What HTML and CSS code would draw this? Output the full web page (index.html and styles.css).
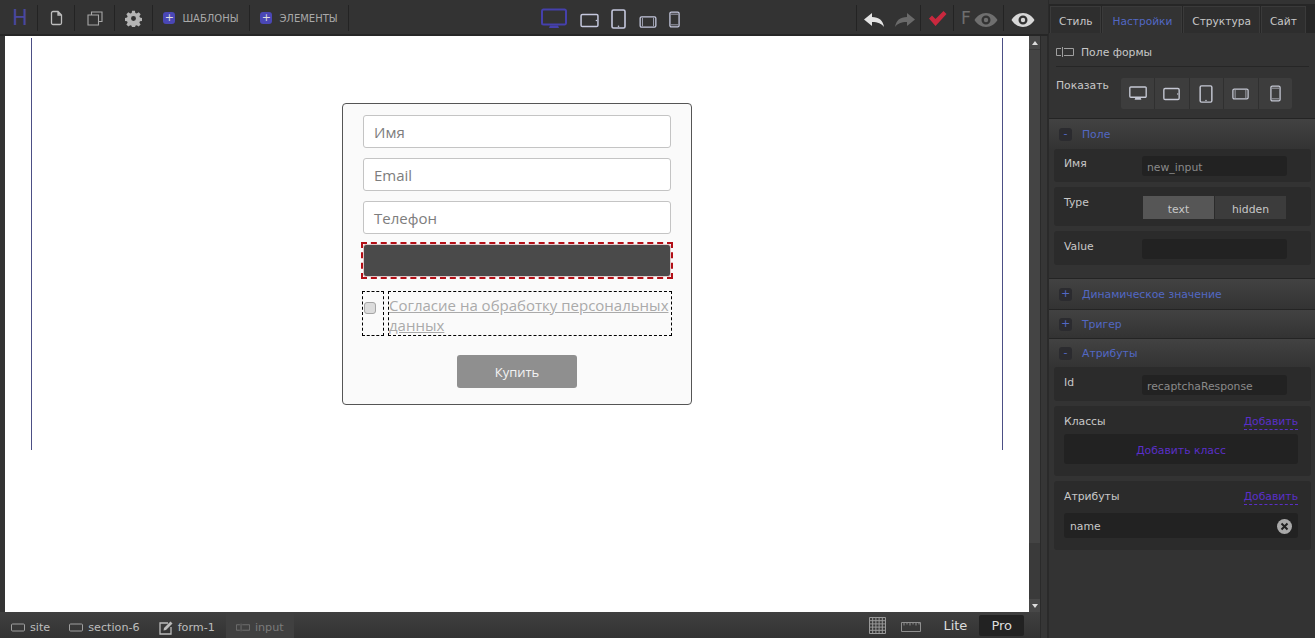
FILE: index.html
```html
<!DOCTYPE html>
<html lang="ru">
<head>
    <meta charset="UTF-8">
    <title>Редактор</title>
    <link rel="stylesheet" href="styles.css">
</head>
<body>
<svg class="defs" width="0" height="0">
    <symbol id="i-desk" viewBox="0 0 26 22"><path d="M2.500 1.500h21a1.500 1.500 0 0 1 1.500 1.500v12a1.500 1.500 0 0 1-1.500 1.500h-21a1.500 1.500 0 0 1-1.500-1.500v-12a1.500 1.500 0 0 1 1.500-1.500z" fill="none" stroke="currentColor" stroke-width="2"/><path d="M9 17.500h8l1 2.500h-10z" fill="currentColor"/></symbol>
    <symbol id="i-tabh" viewBox="0 0 20 16"><rect x="1" y="1.500" width="18" height="13" rx="1.500" fill="none" stroke="currentColor" stroke-width="1.600"/><circle cx="17.300" cy="8" r=".8" fill="currentColor"/></symbol>
    <symbol id="i-tabv" viewBox="0 0 15 20"><rect x="1" y="1" width="13" height="18" rx="1.500" fill="none" stroke="currentColor" stroke-width="1.600"/><circle cx="7.500" cy="17.300" r=".8" fill="currentColor"/></symbol>
    <symbol id="i-phh" viewBox="0 0 19 13"><rect x="1" y="1" width="17" height="11" rx="1.500" fill="none" stroke="currentColor" stroke-width="1.400"/><path d="M3.500 2v9M15.500 2v9" stroke="currentColor" stroke-width=".8"/></symbol>
    <symbol id="i-phv" viewBox="0 0 12 18"><rect x="1" y="1" width="10" height="16" rx="1.500" fill="none" stroke="currentColor" stroke-width="1.400"/><path d="M2 3.200h8M2 14.800h8" stroke="currentColor" stroke-width=".8"/></symbol>
    <symbol id="i-field" viewBox="0 0 18 10"><path d="M5 1.500H.5v7H5M8 1.500h9.500v7H8M6.500 0v10" fill="none" stroke="currentColor"/></symbol>
    <symbol id="i-box" viewBox="0 0 14 9"><rect x=".5" y="1" width="13" height="7" rx="1" fill="none" stroke="currentColor"/></symbol>
    <symbol id="i-eye" viewBox="0 0 24 16"><path fill-rule="evenodd" d="M12 1c5 0 9 3 11.500 7-2.500 4-6.500 7-11.500 7s-9-3-11.500-7c2.500-4 6.500-7 11.500-7zm0 2.500a4.500 4.500 0 1 0 0 9 4.500 4.500 0 0 0 0-9zm0 2.300a2.200 2.200 0 1 1 0 4.400 2.200 2.200 0 0 1 0-4.400z" fill="currentColor"/></symbol>
    <symbol id="i-arrow" viewBox="0 0 22 16"><path d="M9 1v4c7 0 11 3.500 12 10-2.500-3.500-6-5-12-5v4L1 7.500z" fill="currentColor"/></symbol>
</svg>

<header class="topbar">
    <div class="tool tool-logo">H</div>
    <div class="tool tool-icon">
        <svg width="13" height="16" viewBox="0 0 13 16"><path d="M1.500 3a1.500 1.500 0 0 1 1.500-1.500h5l3.500 3.500v8a1.500 1.500 0 0 1-1.500 1.500h-7a1.500 1.500 0 0 1-1.500-1.500zM8 1.500v3.500h3.500" fill="none" stroke="#bdbdbd" stroke-width="1.300"/></svg>
    </div>
    <div class="tool tool-icon tool-copy">
        <svg width="16" height="15" viewBox="0 0 16 15"><path d="M4.500 3.500v-2.500h10.500v9.500h-3M1 4h10.500v10h-10.500z" fill="none" stroke="#a8a8a8" stroke-width="1.100"/></svg>
    </div>
    <div class="tool tool-icon tool-gear">
        <svg width="17" height="17" viewBox="0 0 24 24"><path fill-rule="evenodd" fill="#b5b5b5" d="M10 1h4l.6 3.200 2 .8 2.700-1.800 2.800 2.800-1.800 2.700.8 2 3.200.6v4l-3.200.6-.8 2 1.800 2.700-2.800 2.800-2.700-1.800-2 .8-.6 3.200h-4l-.6-3.200-2-.8-2.700 1.800-2.800-2.800 1.800-2.700-.8-2-3.200-.6v-4l3.200-.6.800-2-1.800-2.700 2.800-2.800 2.700 1.800 2-.8zM12 8.500a3.500 3.500 0 1 0 0 7 3.500 3.500 0 0 0 0-7z"/></svg>
    </div>
    <div class="tool tool-add"><span class="plus">+</span>ШАБЛОНЫ</div>
    <div class="tool tool-add tool-last"><span class="plus">+</span>ЭЛЕМЕНТЫ</div>

    <div class="devices">
        <svg class="dev-active" width="26" height="22"><use href="#i-desk"/></svg>
        <svg class="dev-b2" width="19" height="15"><use href="#i-tabh"/></svg>
        <svg class="dev-b1" width="15" height="20"><use href="#i-tabv"/></svg>
        <svg class="dev-b2" width="18" height="12"><use href="#i-phh"/></svg>
        <svg class="dev-b2" width="11" height="17"><use href="#i-phv"/></svg>
    </div>

    <div class="actions">
        <div class="action act-undo">
            <svg width="22" height="16"><use href="#i-arrow"/></svg>
            <svg class="redo" width="22" height="16"><use href="#i-arrow"/></svg>
        </div>
        <div class="action act-check">
            <svg width="19" height="16" viewBox="0 0 19 16"><path d="M1 8.500l3-3 3.500 3.500 8-8 3 3-11 12z" fill="#c9283e"/></svg>
        </div>
        <div class="action act-f"><span class="f">F</span><svg width="24" height="16"><use href="#i-eye"/></svg></div>
        <div class="action act-eye"><svg width="24" height="16"><use href="#i-eye"/></svg></div>
    </div>
</header>

<div class="middle">
    <div class="work">
        <main class="stage">
            <div class="canvas">
                <div class="section">
                    <form class="order">
                        <div class="fake-input">Имя</div>
                        <div class="fake-input">Email</div>
                        <div class="fake-input">Телефон</div>
                        <div class="selected"><div class="dark-input"></div></div>
                        <div class="agree">
                            <div class="agree-box"><span class="check"></span></div>
                            <div class="agree-text"><a>Согласие на обработку персональных данных</a></div>
                        </div>
                        <div class="buy">Купить</div>
                    </form>
                </div>
            </div>
            <div class="scroll">
                <div class="scroll-btn"><span class="arrow-up"></span></div>
                <div class="scroll-thumb"></div>
                <div class="scroll-track"></div>
                <div class="scroll-btn"><span class="arrow-down"></span></div>
            </div>
        </main>

        <footer class="crumbs">
            <div class="crumb"><svg width="14" height="9"><use href="#i-box"/></svg>site</div>
            <div class="crumb"><svg width="14" height="9"><use href="#i-box"/></svg>section-6</div>
            <div class="crumb crumb-form">
                <svg width="14" height="14" viewBox="0 0 14 14"><path d="M9 2h-8v11h11v-7" fill="none" stroke="#bbb" stroke-width="1.300"/><path d="M4.500 9.500l.5-2.500 6.500-6.500 2 2-6.500 6.500z" fill="#bbb"/></svg>
                form-1
            </div>
            <div class="crumb crumb-on"><svg width="14" height="9"><use href="#i-field"/></svg>input</div>
            <div class="bottom-right">
                <svg width="17" height="17" viewBox="0 0 17 17"><path d="M.5 .5h16v16h-16zM3.700 .5v16M6.900 .5v16M10.100 .5v16M13.300 .5v16M.5 3.700h16M.5 6.900h16M.5 10.100h16M.5 13.300h16" fill="none" stroke="#9a9a9a"/></svg>
                <svg class="ruler" width="20" height="10" viewBox="0 0 20 10"><path d="M.5 .5h19v9h-19zM3 .5v3M6 .5v2M9 .5v3M12 .5v2M15 .5v3M18 .5v2" fill="none" stroke="#8f8f8f"/></svg>
                <span class="mode mode-lite">Lite</span>
                <span class="mode mode-on">Pro</span>
            </div>
        </footer>
    </div>
    <div class="gutter"></div>
</div>

<aside class="panel">
    <nav class="tabs">
        <div class="tab">Стиль</div>
        <div class="tab tab-on">Настройки</div>
        <div class="tab">Структура</div>
        <div class="tab">Сайт</div>
    </nav>
    <div class="element-title"><svg width="18" height="10"><use href="#i-field"/></svg>Поле формы</div>
    <div class="show-row">
        <span>Показать</span>
        <div class="show-group">
            <div><svg width="18" height="15"><use href="#i-desk"/></svg></div>
            <div><svg width="17" height="14"><use href="#i-tabh"/></svg></div>
            <div><svg width="14" height="18"><use href="#i-tabv"/></svg></div>
            <div><svg width="17" height="12"><use href="#i-phh"/></svg></div>
            <div><svg width="11" height="17"><use href="#i-phv"/></svg></div>
        </div>
    </div>

    <div class="acc-head"><span class="acc-sign">-</span>Поле</div>
    <div class="acc-body acc-body-field">
        <div class="card card-name"><label>Имя</label><div class="value">new_input</div></div>
        <div class="card card-type">
            <label>Type</label>
            <div class="switch"><span class="switch-on">text</span><span>hidden</span></div>
        </div>
        <div class="card card-val"><label>Value</label><div class="value"></div></div>
    </div>
    <div class="acc-head"><span class="acc-sign">+</span>Динамическое значение</div>
    <div class="acc-head acc-short"><span class="acc-sign">+</span>Тригер</div>
    <div class="acc-head acc-short"><span class="acc-sign">-</span>Атрибуты</div>
    <div class="acc-body">
        <div class="card card-val"><label>Id</label><div class="value">recaptchaResponse</div></div>
        <div class="card card-list">
            <div class="list-head"><span>Классы</span><a>Добавить</a></div>
            <div class="add-class">Добавить класс</div>
        </div>
        <div class="card card-list card-attrs">
            <div class="list-head"><span>Атрибуты</span><a>Добавить</a></div>
            <div class="attr-row">name
                <svg width="15" height="15" viewBox="0 0 15 15"><circle cx="7.500" cy="7.500" r="7.500" fill="#a9a9a9"/><path d="M4.500 4.500l6 6M10.500 4.500l-6 6" stroke="#222" stroke-width="2"/></svg>
            </div>
        </div>
    </div>
</aside>
</body>
</html>
```
FILE: styles.css
```css
* {
    box-sizing: border-box;
}
html, body {
    height: 100%;
    margin: 0;
    overflow: hidden;
}
body {
    display: grid;
    grid-template-columns: 1048px 267px;
    grid-template-rows: 36px 602px;
    background: #333;
    color: #c8c8c8;
    font-family: "DejaVu Sans", sans-serif;
    font-size: 11px;
}
.defs {
    position: absolute;
}

/* top bar */
.topbar {
    grid-column: 1;
    grid-row: 1;
    display: flex;
    align-items: center;
    height: 36px;
    padding-top: 2px;
    background: #333;
    border-bottom: 2px solid #262626;
}
.tool {
    display: flex;
    align-items: center;
    justify-content: center;
    height: 26px;
    border-right: 1px solid #232323;
}
.tool-logo {
    width: 38px;
    padding-left: 3px;
    color: #4a479f;
    font-size: 21px;
}
.tool-icon {
    width: 37px;
}
.tool-copy {
    width: 40px;
}
.tool-gear {
    width: 38px;
}
.tool-add {
    width: 97px;
    color: #a9a9a9;
    font-size: 10px;
}
.tool-last {
    width: 99px;
}
.plus {
    display: inline-block;
    width: 12px;
    height: 12px;
    margin-right: 7px;
    border-radius: 3px;
    background: #4a47b5;
    color: #ddd;
    font-size: 11px;
    line-height: 11px;
    text-align: center;
}
.devices {
    display: flex;
    align-items: flex-end;
    gap: 12.500px;
    height: 22px;
    margin: 2px 0 0 192px;
    color: #c5c8de;
}
.dev-active {
    color: #4540ac;
}
.dev-b1 {
    margin-bottom: 1px;
}
.dev-b2 {
    margin-bottom: 2px;
}
.actions {
    display: flex;
    align-items: center;
    margin-left: auto;
}
.action {
    display: flex;
    align-items: center;
    height: 26px;
    border-left: 1px solid #232323;
}
.action svg {
    margin-top: 3px;
}
.act-undo {
    gap: 9px;
    width: 64px;
    padding-left: 6px;
    color: #e4e4e4;
}
.redo {
    transform: scaleX(-1);
    color: #6a6a6a;
}
.act-check {
    width: 33px;
    padding-left: 7px;
}
.act-check svg {
    margin-top: 0;
}
.act-f {
    width: 50px;
    padding-left: 7px;
    color: #6f6f6f;
}
.f {
    margin-right: 3px;
    font-size: 17px;
}
.act-eye {
    width: 45px;
    padding-left: 7px;
    color: #d8d8d8;
}

/* middle, canvas and footer */
.middle {
    grid-column: 1;
    grid-row: 2;
    display: flex;
    min-height: 0;
}
.work {
    display: flex;
    flex-direction: column;
    width: 1040px;
}
.gutter {
    width: 8px;
    background: #363636;
    border-left: 1px solid #2a2a2a;
    border-right: 1px solid #2a2a2a;
}
.stage {
    display: flex;
    height: 576px;
    padding-left: 5px;
}
.canvas {
    width: 1024px;
    background: #fff;
    padding: 2px 26px 0;
}
.section {
    display: flex;
    justify-content: center;
    align-items: flex-start;
    height: 412px;
    padding-top: 65px;
    border-left: 1px solid #4c4f85;
    border-right: 1px solid #4c4f85;
}
.order {
    width: 350px;
    height: 302px;
    padding: 11px 20px 0;
    background: #fafafa;
    border: 1px solid #555;
    border-radius: 4px;
    font-family: "Open Sans", sans-serif;
}
.fake-input {
    height: 33px;
    margin-bottom: 10px;
    padding-left: 10px;
    background: #fff;
    border: 1px solid #c4c4c4;
    border-radius: 3px;
    color: #7d7d7d;
    font-size: 15px;
    line-height: 32px;
}
.selected {
    width: 312px;
    height: 37px;
    margin: -2px 0 0 -2px;
    border: 2px dashed #b30f17;
}
.dark-input {
    height: 33px;
    background: #4a4a4a;
    border: 1px solid #e0c8c8;
    border-radius: 3px;
}
.agree {
    display: flex;
    gap: 4px;
    width: 310px;
    height: 45px;
    margin: 12px 0 0 -1px;
}
.agree-box {
    width: 22px;
    padding: 10px 0 0 1px;
    border: 1px dashed #000;
}
.check {
    display: block;
    width: 12px;
    height: 12px;
    background: #dcdcdc;
    border: 1px solid #a5a5a5;
    border-radius: 3px;
}
.agree-text {
    flex: 1;
    padding-top: 3px;
    border: 1px dashed #000;
    color: #aaa;
    font-size: 15px;
    line-height: 20px;
}
.agree-text a {
    text-decoration: underline;
}
.buy {
    width: 120px;
    height: 33px;
    margin: 19px auto 0;
    background: #8f8f8f;
    border-radius: 3px;
    color: #f3f3f3;
    font-size: 13px;
    line-height: 34px;
    text-align: center;
}
.scroll {
    display: flex;
    flex-direction: column;
    width: 11px;
    background: #3a3a3a;
}
.scroll-btn {
    display: flex;
    align-items: center;
    justify-content: center;
    height: 13px;
    background: #484848;
}
.arrow-up, .arrow-down {
    border-left: 3px solid transparent;
    border-right: 3px solid transparent;
}
.arrow-up {
    border-bottom: 4px solid #ddd;
}
.arrow-down {
    border-top: 4px solid #ddd;
}
.scroll-thumb {
    height: 494px;
    background: #444;
    border-top: 1px solid #3a3a3a;
}
.scroll-track {
    flex: 1;
}
.crumbs {
    display: flex;
    align-items: stretch;
    height: 26px;
    padding-left: 11px;
    background: linear-gradient(#404040, #333);
    font-size: 11.200px;
}
.crumb {
    display: flex;
    align-items: center;
    gap: 5px;
    margin-right: 19px;
    padding-top: 5px;
    color: #bdbdbd;
}
.crumb svg {
    color: #9f9f9f;
}
.crumb-form {
    margin-right: 0;
    padding-right: 11px;
}
.crumb-on {
    margin: 0;
    padding: 5px 10px 0;
    background: #404040;
    color: #7b7b7b;
}
.crumb-on svg {
    color: #7b7b7b;
}
.bottom-right {
    display: flex;
    align-items: center;
    margin-left: auto;
    padding-right: 16px;
}
.ruler {
    margin: 3px 0 0 15px;
}
.mode {
    padding: 3px 12px;
    color: #ddd;
    font-size: 13px;
}
.mode-lite {
    margin-left: 10px;
}
.mode-on {
    margin-top: 1px;
    background: #222;
    border-radius: 2px;
}

/* right panel */
.panel {
    grid-column: 2;
    grid-row: 1 / span 2;
    padding-top: 4px;
    border-left: 1px solid #2a2a2a;
    background: #333;
    font-size: 10.800px;
}
.tabs {
    display: flex;
    gap: 1px;
    height: 29px;
    padding: 2px 0 0 1px;
    background: #262626;
}
.tab {
    padding: 2px 8px 0;
    background: #2e2e2e;
    border: 1px solid #3a3a3a;
    border-bottom: 0;
    font-size: 10.600px;
    line-height: 24px;
}
.tab-on {
    padding: 2px 9px 0;
    background: #333;
    color: #5268c4;
}
.element-title {
    display: flex;
    align-items: center;
    gap: 7px;
    height: 34px;
    margin: 0 6px 0 7px;
    padding-top: 5px;
    border-bottom: 1px solid #262626;
}
.element-title svg {
    color: #a0a0a0;
}
.show-row {
    display: flex;
    gap: 12px;
    height: 51px;
    padding: 11px 0 0 7px;
}
.show-row span {
    padding-top: 1px;
}
.show-group {
    display: flex;
    width: 171px;
    height: 31px;
    background: #3d3d3d;
    border-radius: 2px;
    color: #c5c8d4;
}
.show-group div {
    flex: 1;
    display: flex;
    align-items: center;
    justify-content: center;
    border-left: 1px solid #303030;
}
.show-group div:first-child {
    border-left: 0;
}
.acc-head {
    display: flex;
    align-items: center;
    gap: 10px;
    height: 31px;
    padding-left: 10px;
    background: linear-gradient(#424242, #333);
    border-top: 1px solid #242424;
    color: #5268c4;
}
.acc-short {
    height: 29px;
}
.acc-sign {
    width: 13px;
    height: 13px;
    background: #2b2b2f;
    border-radius: 3px;
    font-size: 11px;
    line-height: 12px;
    text-align: center;
}
.acc-body {
    padding: 0 4px 0 5px;
}
.acc-body-field {
    height: 129px;
}
.card {
    margin-bottom: 5px;
    padding: 0 24px 0 10px;
    background: #2b2b2b;
    border-radius: 3px;
}
.card-name, .card-type, .card-val {
    display: flex;
    justify-content: space-between;
}
.card-name label, .card-val label {
    padding-top: 1px;
}
.card-name {
    height: 33px;
    padding-top: 7px;
}
.card-type {
    height: 39px;
    padding-top: 9px;
}
.card-val {
    height: 34px;
    padding-top: 8px;
}
.value {
    width: 145px;
    height: 20px;
    padding-left: 5px;
    background: #222;
    border-radius: 3px;
    color: #8a8a8a;
    line-height: 23px;
}
.switch {
    display: flex;
    width: 144px;
    height: 23px;
    text-align: center;
    line-height: 28px;
    background: #3c3c3c;
}
.switch span {
    flex: 1;
    border-right: 1px solid #2b2b2b;
}
.switch .switch-on {
    background: #565656;
}
.card-list {
    padding: 8px 13px 12px 10px;
}
.list-head {
    display: flex;
    justify-content: space-between;
    height: 20px;
    padding-top: 1px;
}
.card-attrs .list-head {
    height: 24px;
}
.list-head a {
    height: 15px;
    border-bottom: 1px dashed #5a2fc8;
    color: #5a2fc8;
    line-height: 14px;
}
.add-class {
    height: 30px;
    background: #222;
    border-radius: 3px;
    color: #5a2fc8;
    line-height: 33px;
    text-align: center;
}
.attr-row {
    display: flex;
    align-items: center;
    justify-content: space-between;
    height: 25px;
    padding: 2px 6px 0;
    background: #222;
    border-radius: 3px;
}
```
